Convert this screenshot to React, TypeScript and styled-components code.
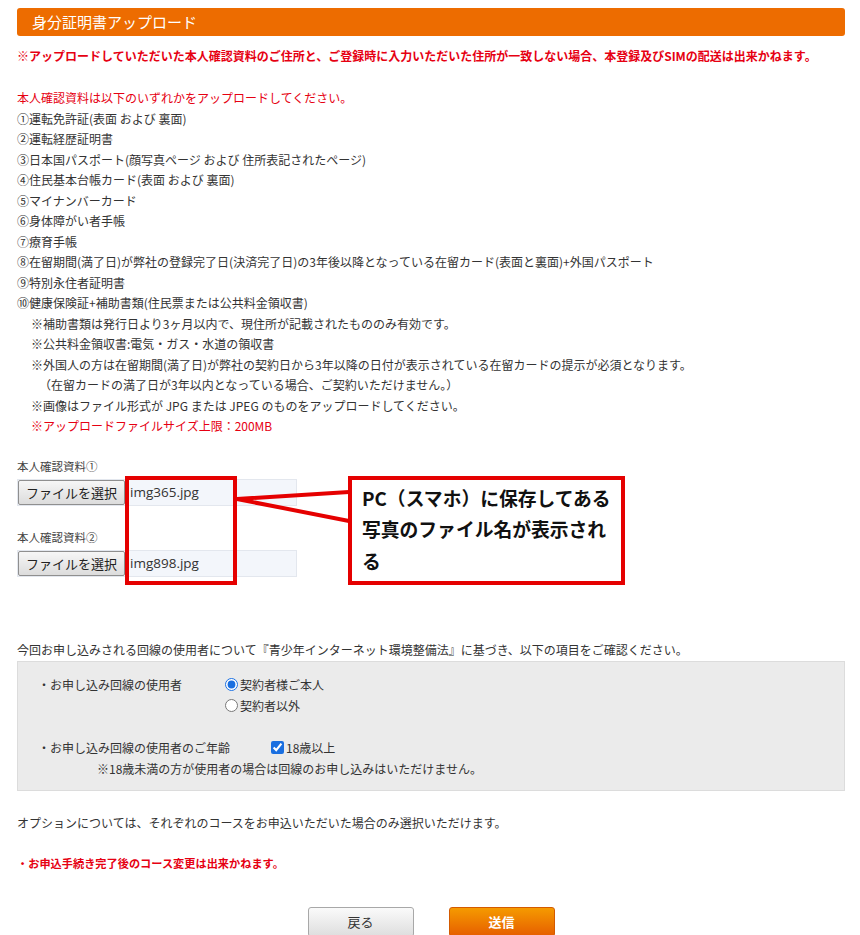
import React from 'react';
import styled, { createGlobalStyle } from 'styled-components';

const GlobalStyle = createGlobalStyle`
  body {
    margin: 0;
    background: #fff;
    font-family: "Noto Sans CJK JP", "Noto Sans", sans-serif;
    color: #333;
  }
`;

const Page = styled.div`
  width: 828px;
  padding: 8px 15px 0 17px;
  font-size: 12px;
`;

const SectionHeader = styled.div`
  height: 28px;
  line-height: 28px;
  padding-left: 15px;
  background: #ed6c00;
  border-radius: 3px;
  color: #fff;
  font-size: 15px;
`;

const Warning = styled.p<{ size?: number; top?: number }>`
  margin: ${p => p.top ?? 10}px 0 0;
  line-height: 20px;
  font-size: ${p => p.size ?? 12}px;
  font-weight: bold;
  color: #e60012;
  white-space: nowrap;
`;

const DocList = styled.ul`
  list-style: none;
  margin: 22px 0 0;
  padding: 0;
  line-height: 20.5px;
  white-space: nowrap;
`;

const DocItem = styled.li<{ indent?: number; red?: boolean }>`
  padding-left: ${p => p.indent ?? 0}px;
  color: ${p => (p.red ? '#e60012' : '#333')};
`;

const UploadArea = styled.div`
  position: relative;
  margin-top: 21px;
`;

const FieldLabel = styled.div<{ top?: number }>`
  margin-top: ${p => p.top ?? 0}px;
  line-height: 16px;
  font-size: 11.5px;
  color: #444;
`;

const FileInput = styled.div`
  display: flex;
  width: 280px;
  height: 27px;
  margin-top: 5px;
  background: #f3f6fb;
  border: 1px solid #e3e7ee;
  box-sizing: border-box;
`;

const FileButton = styled.div`
  display: flex;
  align-items: center;
  padding: 0 7px;
  height: 100%;
  box-sizing: border-box;
  border: 1px solid #8f8f8f;
  border-radius: 2px;
  background: linear-gradient(#f6f6f6, #dcdcdc);
  font-size: 13px;
  color: #222;
  white-space: nowrap;
`;

const FileName = styled.div`
  display: flex;
  align-items: center;
  padding-left: 5px;
  font-family: "Open Sans", "Noto Sans", sans-serif;
  font-size: 13.5px;
  color: #333;
`;

const Highlight = styled.div`
  position: absolute;
  left: 108px;
  top: 18px;
  width: 112px;
  height: 109px;
  box-sizing: border-box;
  border: 4px solid #e50000;
`;

const Callout = styled.div`
  position: absolute;
  left: 331px;
  top: 18px;
  width: 277px;
  height: 109px;
  box-sizing: border-box;
  border: 4px solid #e50000;
  background: #fff;
  padding: 2px 10px;
  font-size: 18.8px;
  font-weight: bold;
  line-height: 31.5px;
  color: #111;
  white-space: nowrap;
`;

const Tail = styled.svg`
  position: absolute;
  left: 218px;
  top: 30px;
`;

const Intro = styled.p`
  margin: 63px 0 0;
  line-height: 20px;
  white-space: nowrap;
`;

const CheckPanel = styled.div`
  margin-top: 1px;
  height: 130px;
  box-sizing: border-box;
  padding: 12px 0 0 20px;
  background: #ebebeb;
  border: 1px solid #dcdcdc;
`;

const CheckRow = styled.div<{ top?: number }>`
  display: flex;
  margin-top: ${p => p.top ?? 0}px;
  line-height: 21px;
`;

const RowLabel = styled.div`
  width: 187px;
  flex-shrink: 0;
`;

const AgeLabel = styled.div`
  margin-right: 41px;
`;

const Choices = styled.div`
  display: flex;
  flex-direction: column;
`;

const Choice = styled.label`
  display: flex;
  align-items: center;
  gap: 2px;
  height: 21px;
  input {
    margin: 0;
    width: 13px;
    height: 13px;
    accent-color: #1a6fe0;
  }
`;

const AgeNote = styled.div`
  padding-left: 59px;
  line-height: 21px;
`;

const Plain = styled.p<{ top: number }>`
  margin: ${p => p.top}px 0 0;
  line-height: 20px;
  white-space: nowrap;
`;

const Buttons = styled.div`
  display: flex;
  justify-content: center;
  gap: 35px;
  margin-top: 34px;
`;

const ActionButton = styled.button<{ primary?: boolean }>`
  width: 106px;
  height: 30px;
  border-radius: 3px;
  font-family: inherit;
  font-size: 13px;
  font-weight: ${p => (p.primary ? 'bold' : 'normal')};
  color: ${p => (p.primary ? '#fff' : '#333')};
  border: 1px solid ${p => (p.primary ? '#d35a00' : '#a8a8a8')};
  background: ${p =>
    p.primary
      ? 'linear-gradient(#f59a00, #e65e00)'
      : 'linear-gradient(#fafafa, #dedede)'};
`;

const documents = [
  { text: '①運転免許証(表面 および 裏面)' },
  { text: '②運転経歴証明書' },
  { text: '③日本国パスポート(顔写真ページ および 住所表記されたページ)' },
  { text: '④住民基本台帳カード(表面 および 裏面)' },
  { text: '⑤マイナンバーカード' },
  { text: '⑥身体障がい者手帳' },
  { text: '⑦療育手帳' },
  { text: '⑧在留期間(満了日)が弊社の登録完了日(決済完了日)の3年後以降となっている在留カード(表面と裏面)+外国パスポート' },
  { text: '⑨特別永住者証明書' },
  { text: '⑩健康保険証+補助書類(住民票または公共料金領収書)' },
  { text: '※補助書類は発行日より3ヶ月以内で、現住所が記載されたもののみ有効です。', indent: 14 },
  { text: '※公共料金領収書:電気・ガス・水道の領収書', indent: 14 },
  { text: '※外国人の方は在留期間(満了日)が弊社の契約日から3年以降の日付が表示されている在留カードの提示が必須となります。', indent: 14 },
  { text: '（在留カードの満了日が3年以内となっている場合、ご契約いただけません。）', indent: 22 },
  { text: '※画像はファイル形式が JPG または JPEG のものをアップロードしてください。', indent: 14 },
  { text: '※アップロードファイルサイズ上限：200MB', indent: 14, red: true },
];

export default function App() {
  return (
    <Page>
      <GlobalStyle />
      <SectionHeader>身分証明書アップロード</SectionHeader>
      <Warning>
        ※アップロードしていただいた本人確認資料のご住所と、ご登録時に入力いただいた住所が一致しない場合、本登録及びSIMの配送は出来かねます。
      </Warning>

      <DocList>
        <DocItem red>本人確認資料は以下のいずれかをアップロードしてください。</DocItem>
        {documents.map(d => (
          <DocItem key={d.text} indent={d.indent} red={d.red}>
            {d.text}
          </DocItem>
        ))}
      </DocList>

      <UploadArea>
        <FieldLabel>本人確認資料①</FieldLabel>
        <FileInput>
          <FileButton>ファイルを選択</FileButton>
          <FileName>img365.jpg</FileName>
        </FileInput>
        <FieldLabel top={23}>本人確認資料②</FieldLabel>
        <FileInput>
          <FileButton>ファイルを選択</FileButton>
          <FileName>img898.jpg</FileName>
        </FileInput>

        <Highlight />
        <Tail width="115" height="38" viewBox="0 0 115 38">
          <polyline
            points="114,4 2,11 114,33"
            fill="none"
            stroke="#e50000"
            strokeWidth="4"
            strokeLinejoin="miter"
          />
        </Tail>
        <Callout>
          PC（スマホ）に保存してある
          <br />
          写真のファイル名が表示され
          <br />る
        </Callout>
      </UploadArea>

      <Intro>
        今回お申し込みされる回線の使用者について『青少年インターネット環境整備法』に基づき、以下の項目をご確認ください。
      </Intro>
      <CheckPanel>
        <CheckRow>
          <RowLabel>・お申し込み回線の使用者</RowLabel>
          <Choices>
            <Choice>
              <input type="radio" name="user" defaultChecked />
              契約者様ご本人
            </Choice>
            <Choice>
              <input type="radio" name="user" />
              契約者以外
            </Choice>
          </Choices>
        </CheckRow>
        <CheckRow top={21}>
          <AgeLabel>・お申し込み回線の使用者のご年齢</AgeLabel>
          <Choice>
            <input type="checkbox" defaultChecked />
            18歳以上
          </Choice>
        </CheckRow>
        <AgeNote>※18歳未満の方が使用者の場合は回線のお申し込みはいただけません。</AgeNote>
      </CheckPanel>

      <Plain top={22}>オプションについては、それぞれのコースをお申込いただいた場合のみ選択いただけます。</Plain>
      <Warning size={11.2} top={20}>・お申込手続き完了後のコース変更は出来かねます。</Warning>

      <Buttons>
        <ActionButton>戻る</ActionButton>
        <ActionButton primary>送信</ActionButton>
      </Buttons>
    </Page>
  );
}
